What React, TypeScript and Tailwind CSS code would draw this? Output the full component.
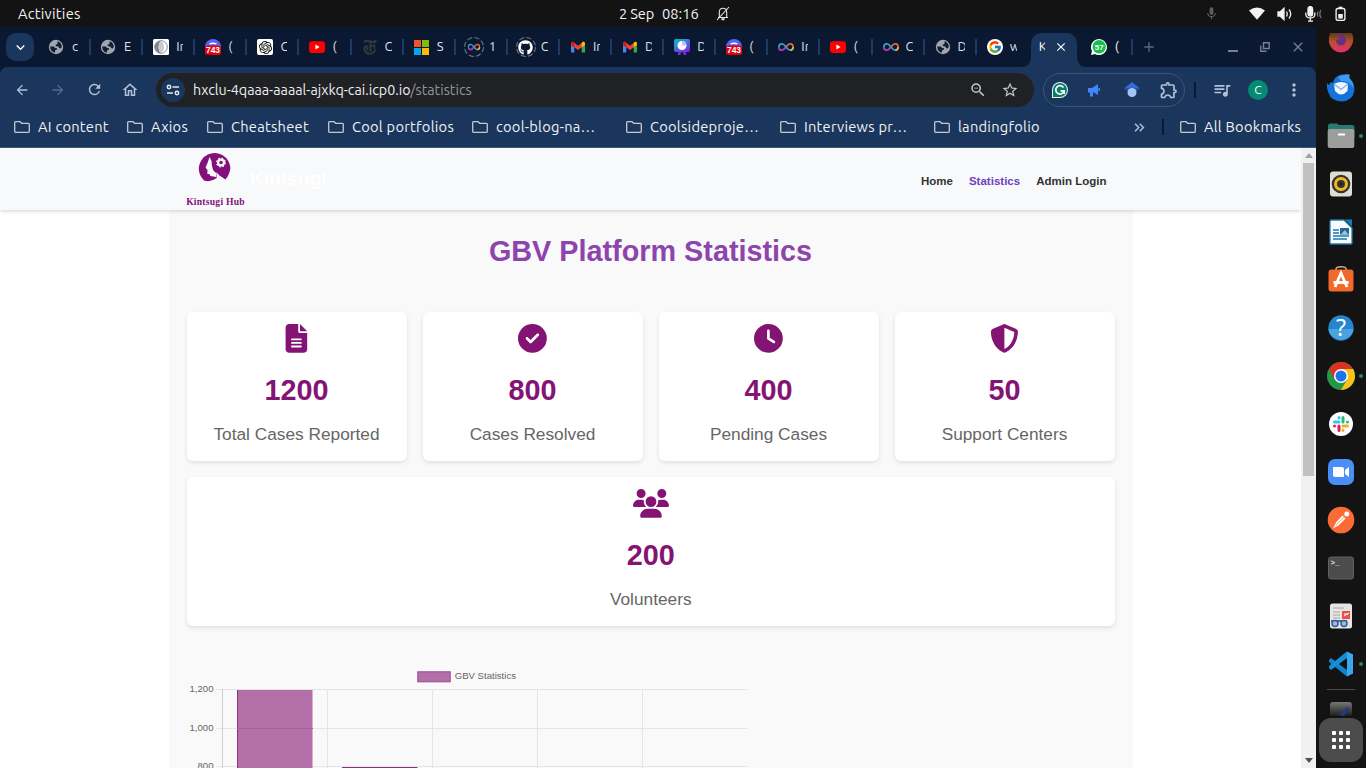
import type { ReactNode } from 'react';
import { FaFileLines, FaCircleCheck, FaClock, FaShieldHalved, FaUsers, FaGithub } from 'react-icons/fa6';
import {
  MdArrowBack, MdArrowForward, MdRefresh, MdStarOutline, MdOutlineExtension, MdQueueMusic,
  MdMoreVert, MdClose, MdAdd, MdKeyboardArrowDown, MdOutlineZoomOut, MdMic,
  MdKeyboardDoubleArrowRight, MdOutlineHome,
} from 'react-icons/md';
import { SiOpenai } from 'react-icons/si';
import { FcGoogle } from 'react-icons/fc';

const Globe = () => (
  <svg viewBox="0 0 16 16" className="size-4 shrink-0">
    <circle cx="8" cy="8" r="7.200" fill="#a0a5ae" />
    <path d="M2.200 7.500 6 7.500 7 9 9 9.200 9 10.500 7.200 11.200 6.800 13.800Q2.200 12.500 2.200 7.500ZM9.500 2.300Q13.500 3.500 13.800 7.500L13 9.500 11 9 10.500 7.500 8 7.300 7.500 5.800 9.500 5Z" fill="#101e34" />
  </svg>
);

const Discord = () => (
  <svg viewBox="0 0 16 16" className="size-4 shrink-0">
    <circle cx="8" cy="8" r="8" fill="#5865f2" />
    <path d="M4.500 5Q8 3.500 11.500 5" stroke="#fff" strokeWidth="1.300" fill="none" />
    <rect y="6.500" width="16" height="9.500" rx="2.500" fill="#e3000b" />
    <text x="8" y="14.300" textAnchor="middle" fontFamily="Liberation Sans" fontWeight="700" fontSize="8.400" fill="#fff">743</text>
  </svg>
);

const YouTube = () => (
  <svg viewBox="0 0 16 16" className="size-4 shrink-0">
    <rect y="2.300" width="16" height="11.600" rx="3" fill="#f00" />
    <path d="M6.400 5.600 10.600 8 6.400 10.400Z" fill="#fff" />
  </svg>
);

const Gmail = () => (
  <svg viewBox="0 0 16 16" className="size-4 shrink-0">
    <path d="M1 4.500V13.500H4.300V7Z" fill="#4285f4" />
    <path d="M15 4.500V13.500H11.700V7Z" fill="#34a853" />
    <path d="M1 4.300Q1.200 2.300 3 2.800L8 6.700 13 2.800Q14.800 2.300 15 4.300L15 6 8 11 1 6Z" fill="#ea4335" />
    <path d="M11.700 4 13 2.800Q14.800 2.300 15 4.300V6L11.700 8.400Z" fill="#fbbc04" />
    <path d="M1 4.300Q1.200 2.300 3 2.800L4.300 4V8.400L1 6Z" fill="#c5221f" />
  </svg>
);

const Infinity = () => (
  <svg viewBox="0 0 16 16" className="size-4 shrink-0">
    <path d="M8 8C6.500 6 5.400 4.800 3.800 4.800A3.100 3.100 0 0 0 .9 8a3.100 3.100 0 0 0 2.900 3.200C5.400 11.200 6.500 10 8 8" fill="none" stroke="#29abe2" strokeWidth="1.600" />
    <path d="M.9 8a3.100 3.100 0 0 0 2.900 3.200C5.400 11.200 6.500 10 8 8" fill="none" stroke="#c22aa0" strokeWidth="1.600" />
    <path d="M8 8C9.500 6 10.600 4.800 12.200 4.800A3.100 3.100 0 0 1 15.100 8" fill="none" stroke="#f26a2c" strokeWidth="1.600" />
    <path d="M15.100 8a3.100 3.100 0 0 1-2.900 3.200C10.600 11.200 9.500 10 8 8" fill="none" stroke="#29abe2" strokeWidth="1.600" />
    <path d="M15.100 8a3.100 3.100 0 0 1-2.900 3.200" fill="none" stroke="#fbb03b" strokeWidth="1.600" />
  </svg>
);

const SmallInfinity = () => <div className="flex scale-[.8]"><Infinity /></div>;

const Dashed = ({ children }: { children: ReactNode }) => (
  <div className="relative -mx-[2px] flex size-5 shrink-0 items-center justify-center">
    <svg viewBox="0 0 20 20" className="absolute inset-0 size-5 overflow-visible">
      <circle cx="10" cy="10" r="9.500" fill="none" stroke="#66738a" strokeWidth="1.100" strokeDasharray="5.400 2.060" />
    </svg>
    {children}
  </div>
);

const Microsoft = () => (
  <div className="grid size-[15px] grid-cols-2 gap-px">
    <i className="bg-[#f35325]" /><i className="bg-[#81bc06]" /><i className="bg-[#05a6f0]" /><i className="bg-[#ffba08]" />
  </div>
);

const Times = () => (
  <svg viewBox="0 0 16 16" className="size-4 shrink-0" fill="none" stroke="#363a40">
    <path d="M2 3.500Q2.500 1.500 5 1.700L11 3Q13.500 3.300 13.800 1" strokeWidth="2" />
    <path d="M4.500 6.500Q2 8 2.500 11.200 4 15 8.500 14.800 12.500 14 13.300 10.500" strokeWidth="1.800" />
    <path d="M8.500 3V13M5.500 6.500V11.500" strokeWidth="1.800" />
    <path d="M8.500 7.500 12.500 6V10" strokeWidth="1.500" />
  </svg>
);

const Moon = () => (
  <svg viewBox="0 0 16 16" className="size-4 shrink-0">
    <rect width="16" height="16" rx="1.500" fill="#fff" />
    <circle cx="8" cy="8" r="6.300" fill="#fff" stroke="#8a9096" strokeWidth="1" />
    <path d="M8 1.700a6.300 6.300 0 0 0 0 12.600Q5.500 12 5.500 8T8 1.700" fill="#7d858c" />
    <path d="M8 1.700Q5.500 4 5.500 8T8 14.300Q11 12 11 8T8 1.700" fill="#c8ccd0" />
  </svg>
);

const OpenAI = () => <div className="flex size-4 items-center justify-center rounded-[2px] bg-white"><SiOpenai className="size-[13px] text-black" /></div>;

const Award = () => (
  <svg viewBox="0 0 16 16" className="size-4 shrink-0">
    <defs><linearGradient id="aw" x1="0" y1="0" x2=".7" y2="1"><stop offset="0" stopColor="#00c4cc" /><stop offset="1" stopColor="#7d2ae8" /></linearGradient></defs>
    <path d="M5 12 3.500 16H6L8 12 10 16H12.500L11 12Z" fill="#7d2ae8" />
    <rect width="16" height="13" rx="2" fill="url(#aw)" />
    <circle cx="8" cy="6.500" r="4.500" fill="#fff" />
    <path d="M8 6.500V2A4.500 4.500 0 0 1 12.500 6.500Z" fill="#c9b8f8" />
  </svg>
);

const Google = () => <div className="flex size-4 items-center justify-center rounded-full bg-white"><FcGoogle className="size-[14px]" /></div>;

const tabs: { icon: ReactNode; t: string }[] = [
  { icon: <div className="mr-px -ml-px"><Globe /></div>, t: 'c' },
  { icon: <div className="mr-px -ml-px"><Globe /></div>, t: 'E' },
  { icon: <Moon />, t: 'In' },
  { icon: <Discord />, t: '(' },
  { icon: <OpenAI />, t: 'C' },
  { icon: <YouTube />, t: '(' },
  { icon: <Times />, t: 'C' },
  { icon: <Microsoft />, t: 'S' },
  { icon: <Dashed><SmallInfinity /></Dashed>, t: '1' },
  { icon: <Dashed><FaGithub className="size-[15px] text-white" /></Dashed>, t: 'C' },
  { icon: <Gmail />, t: 'In' },
  { icon: <Gmail />, t: 'D' },
  { icon: <Award />, t: 'D' },
  { icon: <Discord />, t: '(' },
  { icon: <Infinity />, t: 'In' },
  { icon: <YouTube />, t: '(' },
  { icon: <Infinity />, t: 'C' },
  { icon: <Globe />, t: 'D' },
  { icon: <Google />, t: 'w' },
];

function TopBar() {
  return (
    <div className="flex h-[27px] shrink-0 items-center bg-[#131313] text-[14.660px] text-[#f2f2f2]">
      <span className="ml-[18px] w-[601px] pt-px tracking-[0.250px]">Activities</span>
      <span className="w-[43px] pt-px tracking-[-0.150px] whitespace-pre">2 Sep</span>
      <span className="w-[54px] pt-px">08:16</span>
      <svg viewBox="0 0 14 15" className="h-[15px] w-[14px]" fill="none" stroke="#e6e6e6" strokeWidth="1.100">
        <path d="M2 11.500H12M3.300 11V6Q3.500 2.200 7 2.200T10.700 6V11M1 14 13 1" />
        <path d="M5.500 13.200H8.500" strokeWidth="2" />
      </svg>
      <MdMic className="ml-[474px] size-[15px] text-[#5e5e5e]" />
      <svg viewBox="0 0 16 13" className="ml-[30px] h-[13px] w-4" fill="#f2f2f2"><path d="M0 3.500Q8-2.500 16 3.500L8 12.800Z" /></svg>
      <svg viewBox="0 0 16 14" className="ml-[12px] h-[14px] w-4" fill="none" stroke="#eee" strokeWidth="1.300">
        <path d="M1 5H3L7 1.300V12.700L3 9H1Z" fill="#f2f2f2" /><path d="M9.500 4.500Q11 7 9.500 9.500M12 2.500Q15.500 7 12 11.500" />
      </svg>
      <svg viewBox="0 0 17 16" className="ml-[12px] h-4 w-[17px]" fill="none" stroke="#f2f2f2" strokeWidth="1.300">
        <rect x="3" y=".6" width="4.600" height="9.500" rx="2.300" fill="#f2f2f2" /><path d="M.8 6.500V8.500Q1 12 5.300 12T9.800 8.500V6.500M5.300 12V15M3 15.200H8" />
        <path d="M13 5.500Q11.600 8 13 10.500M16 4Q13.600 8 16 12" stroke="#777" />
      </svg>
      <svg viewBox="0 0 12 16" className="ml-[13px] h-4 w-[11px]" fill="none" stroke="#f2f2f2" strokeWidth="1.500">
        <path d="M4 1H8" strokeWidth="2" /><rect x="1.200" y="2" width="9.600" height="13" rx="2" /><rect x="3.500" y="8" width="5" height="5" fill="#f2f2f2" stroke="none" />
      </svg>
    </div>
  );
}

function TabStrip() {
  return (
    <div className="flex h-10 shrink-0 items-center bg-[#0a1931]">
      <div className="mr-[4px] ml-[6px] flex size-7 shrink-0 items-center justify-center rounded-[10px] bg-[#1b365d]"><MdKeyboardArrowDown className="size-[17px] text-white" /></div>
      {tabs.map((tab, i) => (
        <div key={i} className={`flex h-4 w-[52.100px] shrink-0 items-center pl-[10px] ${i < 18 ? 'border-r-2 border-[#1b3a66]' : ''} ${i === 0 ? 'ml-px -mr-px pr-px' : ''} ${i === 1 ? 'ml-px' : ''}`}>
          <div className="flex w-4 shrink-0 justify-center">{tab.icon}</div>
          <span className="ml-[7px] w-[7px] shrink-0 overflow-hidden text-[13px] whitespace-nowrap text-[#dfe3e8]">{tab.t}</span>
        </div>
      ))}
      <div className="-ml-[8px] flex h-full w-[10px] shrink-0 items-end"><svg viewBox="0 0 10 10" className="size-[10px]"><path d="M10 0V10H0Q10 10 10 0" fill="#1b365d" /></svg></div>
      <div className="flex h-[34px] w-[46px] shrink-0 items-center self-end rounded-t-[10px] bg-[#1b365d] pb-[6px]">
        <span className="ml-[8px] w-[6px] overflow-hidden text-[13px] text-white">K</span>
        <MdClose className="ml-[9px] size-[14px] text-white" />
      </div>
      <div className="flex h-full w-[10px] shrink-0 items-end"><svg viewBox="0 0 10 10" className="size-[10px]"><path d="M0 0V10H10Q0 10 0 0" fill="#1b365d" /></svg></div>
      <svg viewBox="0 0 16 16" className="ml-[4px] size-4 shrink-0">
        <path d="M0 16 1 12A8 8 0 1 1 4 15Z" fill="#fff" /><circle cx="8.200" cy="7.800" r="6.700" fill="#13c24b" />
        <text x="8.200" y="10.700" textAnchor="middle" fontFamily="Liberation Sans" fontWeight="700" fontSize="7.800" fill="#fff">57</text>
      </svg>
      <span className="ml-[8px] w-[16px] text-[13px] text-white">(</span>
      <div className="h-4 w-[2px] shrink-0 bg-[#1b3a66]" />
      <MdAdd className="ml-[8px] size-4 shrink-0 text-[#5b6a7e]" />
      <div className="mr-[10px] ml-auto flex items-center text-[#76818f]">
        <div className="mt-2 h-[2px] w-[10px] bg-[#76818f]" />
        <svg viewBox="0 0 10 10" className="ml-[22px] size-[10px]" fill="none" stroke="currentColor" strokeWidth="1.400"><path d="M3.500.8H9.200V6.500H3.500ZM.8 3.500V9.200H6.500" /></svg>
        <MdClose className="ml-[20px] size-4" />
      </div>
    </div>
  );
}

function Toolbar() {
  return (
    <div className="flex h-[45px] shrink-0 items-center text-[#b3c1d8]">
      <MdArrowBack className="ml-[14px] size-4" />
      <MdArrowForward className="ml-[20px] size-4 text-[#566c8e]" />
      <MdRefresh className="ml-[20px] size-[17px]" />
      <MdOutlineHome className="ml-[18px] size-[18px]" />
      <div className="ml-[17px] flex h-[34px] w-[878px] items-center rounded-full bg-[#202124]">
        <div className="ml-[5px] flex size-6 items-center justify-center rounded-full bg-[#1b365d]">
          <svg viewBox="0 0 14 12" className="h-3 w-[14px]" fill="none" stroke="#e3e8ef" strokeWidth="1.500"><circle cx="3" cy="3" r="1.700" /><path d="M6.500 3H13M1 9H7" /><circle cx="11" cy="9" r="1.700" /></svg>
        </div>
        <span className="ml-[8px] pt-[2px] text-[14.250px] text-[#eceef1]">hxclu-4qaaa-aaaal-ajxkq-cai.icp0.io<span className="text-[#92969b]">/statistics</span></span>
        <MdOutlineZoomOut className="ml-auto size-[18px] text-[#c4c7cb]" />
        <MdStarOutline className="mr-[15px] ml-[14px] size-[18px] text-[#c4c7cb]" />
      </div>
      <div className="ml-[9px] flex h-[34px] w-[142px] items-center rounded-full border border-[#3b5477]">
        <svg viewBox="0 0 16 16" className="ml-[8px] size-4"><path d="M0 16V8A8 8 0 1 1 8 16Z" fill="#e9f3f0" /><path d="M1 15V8A7 7 0 1 1 8 15Z" fill="#087d68" /><path d="M11.500 5.500A4.200 4.200 0 1 0 12.100 8.800H8.500M12.200 8V12" fill="none" stroke="#fff" strokeWidth="1.700" /></svg>
        <svg viewBox="0 0 12 14" className="ml-[20px] h-[14px] w-3" fill="#4285f4"><path d="M0 5H4L10 1V12L6 9.500H5V13.500H2V9.500H0ZM10.500 5H12V8H10.500Z" /></svg>
        <svg viewBox="0 0 16 16" className="ml-[24px] size-4"><path d="M8 0 16 6.500H0Z" fill="#356bd4" /><path d="M0 6.500H16L11 10H5Z" fill="#2455b8" /><circle cx="8" cy="10.500" r="4.500" fill="#a4c2f7" /></svg>
        <MdOutlineExtension className="ml-[19px] size-5" />
      </div>
      <div className="ml-[9px] h-4 w-[2px] bg-[#0a1931]" />
      <MdQueueMusic className="ml-[16px] size-[20px]" />
      <div className="ml-[16px] flex size-5 items-center justify-center rounded-full bg-[#058a73] text-[12px] text-white">C</div>
      <MdMoreVert className="ml-[16px] size-[20px]" />
    </div>
  );
}

const Folder = () => <svg viewBox="0 0 16 12" className="h-3 w-4 shrink-0" fill="none" stroke="#c7c9cc" strokeWidth="1.300"><path d="M1.500.7H6L7.700 2.300H14.500Q15.300 2.300 15.300 3.200V10.500Q15.300 11.300 14.500 11.300H1.500Q.7 11.300.7 10.500V1.500Q.7.7 1.500.7Z" /></svg>;

const bookmarks = [
  { t: 'AI content', c: 'w-[113px]' },
  { t: 'Axios', c: 'w-[80px]' },
  { t: 'Cheatsheet', c: 'w-[121px]' },
  { t: 'Cool portfolios', c: 'w-[144px]' },
  { t: 'cool-blog-na…', c: 'w-[154px]' },
  { t: 'Coolsideproje…', c: 'w-[154px]' },
  { t: 'Interviews pr…', c: 'w-[154px]' },
  { t: 'landingfolio', c: 'w-[192px]' },
];

function Bookmarks() {
  return (
    <div className="flex h-[36px] shrink-0 items-center border-b border-[#3f5676] pb-[5px] pl-[14px] text-[14.660px] tracking-[0.250px] text-[#f0f2f5]">
      {bookmarks.map((b) => (
        <div key={b.t} className={`flex shrink-0 items-center gap-2 whitespace-nowrap ${b.c}`}><Folder />{b.t}</div>
      ))}
      <MdKeyboardDoubleArrowRight className="ml-[5px] size-[17px] text-[#b3c1d8]" />
      <div className="mr-[16px] ml-[14px] h-4 w-[2px] bg-[#0a1931]" />
      <div className="flex items-center gap-2 whitespace-nowrap"><Folder />All Bookmarks</div>
    </div>
  );
}

function Card({ icon, n, label, wide }: { icon: ReactNode; n: string; label: string; wide?: boolean }) {
  return (
    <div className={`flex h-[149px] flex-col items-center rounded-[6px] bg-white pt-3 shadow-[0_2px_4px_rgba(0,0,0,0.1)] ${wide ? 'col-span-4 pr-[0.500px]' : 'pr-px'}`}>
      <div className="h-[29px] text-[28.800px] text-[#841474]">{icon}</div>
      <div className="mt-[21px] text-[28.800px] leading-[33px] font-bold text-[#841474]">{n}</div>
      <div className="mt-[17px] text-[17.280px] leading-5 text-[#666]">{label}</div>
    </div>
  );
}

function Chart() {
  return (
    <svg viewBox="187 660 561 108" className="mt-[34px] h-[108px] w-[561px] shrink-0" fontFamily="Liberation Sans, Arial, sans-serif" fontSize="9.600" fill="#666">
      <rect x="417.800" y="671.800" width="32.400" height="10" fill="#b36fa8" stroke="#9b4690" />
      <text x="454.700" y="679">GBV Statistics</text>
      <g stroke="#e5e5e5">
        <path d="M216 689.500H747M216 728.500H747M216 766.500H747M327.500 689V768M432.500 689V768M537.500 689V768M642.500 689V768" />
        <path d="M222.500 689V768" stroke="#cfcfcf" />
      </g>
      <rect x="237" y="690" width="75.500" height="78" fill="#b36fa8" />
      <path d="M237.500 690V768M342 767.500H417.500" stroke="#8b3580" />
      <path d="M312.500 690V768" stroke="#d6b0d0" />
      <path d="M237 728.500H313" stroke="#a3639a" />
      <g textAnchor="end"><text x="213.500" y="692">1,200</text><text x="213.500" y="731">1,000</text><text x="213.500" y="769">800</text></g>
    </svg>
  );
}

function Logo() {
  return (
    <div className="flex w-[60px] flex-col items-center">
      <svg viewBox="0 0 33 32" className="-ml-px h-8 w-[33px]">
        <path d="M6 28.500A15.800 15.800 0 1 1 32.400 16Q31.800 22 27.500 27.500Q20 23 18.500 20L18.700 26Q12 31 6 28.500Z" fill="#84107a" />
        <path d="M11.500 5Q14 8 13.800 13L15 18 18.500 21.500 18.300 25 12.500 24 11.300 22 9.300 22 9.500 18 7.500 15.500 9.500 11Z" fill="#f8f9fb" />
        <circle cx="23" cy="10.500" r="2.900" fill="none" stroke="#f8f9fb" strokeWidth="2.200" /><circle cx="23" cy="10.500" r="4.300" fill="none" stroke="#f8f9fb" strokeWidth="1.300" strokeDasharray="1.700 1.680" />
      </svg>
      <span className="mt-[12px] ml-px font-['Liberation_Serif',serif] text-[9.600px] leading-[11px] font-bold tracking-[0.250px] whitespace-nowrap text-[#84107a]">Kintsugi Hub</span>
    </div>
  );
}

function WebPage() {
  return (
    <div className="flex min-h-0 flex-1 bg-white font-['Liberation_Sans',Arial,sans-serif]">
      <div className="flex min-w-0 flex-1 flex-col overflow-hidden">
        <div className="z-10 flex h-[62px] shrink-0 items-start bg-[#f8f9fb] shadow-[0_1px_4px_rgba(0,0,0,0.18)]">
          <div className="ml-[185px] pt-[4px]"><Logo /></div>
          <span className="mt-[19px] ml-[5px] text-[19.200px] leading-6 font-bold text-white">Kintsugi</span>
          <div className="mt-[26px] mr-[194.500px] ml-auto flex gap-4 text-[11.520px] leading-[14px] font-bold text-[#333]"><span>Home</span><span className="text-[#6f42c1]">Statistics</span><span>Admin Login</span></div>
        </div>
        <div className="ml-[169px] flex min-h-0 w-[964px] flex-1 flex-col overflow-hidden bg-[#f9f9f9] px-[18px]">
          <h1 className="mt-[24px] pr-px text-center text-[28.800px] leading-[34px] font-bold text-[#8e44ad]">GBV Platform Statistics</h1>
          <div className="mt-[44px] grid shrink-0 grid-cols-4 gap-4">
            <Card icon={<FaFileLines />} n="1200" label="Total Cases Reported" />
            <Card icon={<FaCircleCheck />} n="800" label="Cases Resolved" />
            <Card icon={<FaClock />} n="400" label="Pending Cases" />
            <Card icon={<FaShieldHalved />} n="50" label="Support Centers" />
            <Card icon={<FaUsers className="h-[28.800px] w-[36px]" />} n="200" label="Volunteers" wide />
          </div>
          <Chart />
        </div>
      </div>
      <div className="flex w-[15px] shrink-0 flex-col items-center justify-between bg-[#f1f1f1] py-[5px]">
        <svg viewBox="0 0 8 5" className="h-[5px] w-2"><path d="M0 5 4 0 8 5Z" fill="#a3a3a3" /></svg>
        <div className="mt-[5px] mb-auto h-[313px] w-[11px] bg-[#c1c1c1]" />
        <svg viewBox="0 0 8 5" className="h-[5px] w-2"><path d="M0 0 4 5 8 0Z" fill="#505050" /></svg>
      </div>
    </div>
  );
}

const DockSvg = ({ children }: { children: ReactNode }) => <svg viewBox="0 0 28 28" className="size-7 shrink-0">{children}</svg>;

const dock: { icon: ReactNode; dot?: boolean }[] = [
  { icon: <DockSvg><path d="M0 9 2 11 4 8 6 9Q7 2 15 .5L23 1 21 4Q28 8 27.500 16 26 27 14.500 27.500 4 27 1.500 19L0 14Z" fill="#1671d9" /><path d="M11 3Q20-1 23 1 21 3 24 6 27 9 26 14 22 6 14 7Z" fill="#3f9bf2" /><path d="M7 10Q14 6 21 10L20.500 17Q14 24 8 17Z" fill="#f0f6fd" /><path d="M7 10 14 15.500 21 10" fill="none" stroke="#7fb4ee" strokeWidth="1.300" /></DockSvg> },
  { icon: <DockSvg><path d="M1 4Q1 1.500 3 1.500H10L12 3H25Q27.500 3 27.500 5V16H1Z" fill="#2b7771" /><rect x=".7" y="7" width="26.600" height="19" rx="2" fill="#9d9d9d" /><path d="M11 12.500H18" stroke="#fff" strokeWidth="2" /></DockSvg>, dot: true },
  { icon: <DockSvg><rect x="3" y="1.500" width="22" height="25" rx="3" fill="#e0ddd5" /><circle cx="14" cy="14" r="9.300" fill="#353535" /><circle cx="14" cy="14" r="5.500" fill="none" stroke="#f0ba20" strokeWidth="3" /><circle cx="14" cy="14" r="1.600" fill="#222" /></DockSvg> },
  { icon: <DockSvg><path d="M4 2H17L25 10V25Q25 26 24 26H4Q3 26 3 25V3Z" fill="#f8fbfd" stroke="#247aaa" strokeWidth="1.300" /><path d="M18 1.500H25V8.500Z" fill="#187bb5" /><path d="M6 12H12M6 15H12M6 18H22M6 21H20" stroke="#1d78ad" strokeWidth="1.500" /><rect x="13" y="10" width="9" height="6.500" fill="#286491" /><path d="M14 16 18 12 21 16" fill="#8bc5e8" /></DockSvg> },
  { icon: <DockSvg><path d="M9 5V3Q9 .8 14 .8T19 3V5" fill="none" stroke="#d3ad8a" strokeWidth="1.500" /><rect x="1.500" y="3.500" width="25" height="22" rx="3" fill="#f2692c" /><path d="M8 21 14 7 20 21M6.500 16.500H21.500" fill="none" stroke="#fff" strokeWidth="2.800" /></DockSvg> },
  { icon: <DockSvg><circle cx="14" cy="14" r="12.700" fill="#2586cf" /><path d="M1.500 15H26.500A12.600 12.600 0 0 1 1.500 15" fill="#48a3df" /><text x="14" y="22" textAnchor="middle" fontFamily="Noto Sans, sans-serif" fontSize="23" fill="#fff">?</text></DockSvg> },
  { icon: <DockSvg><circle cx="14" cy="14" r="14" fill="#259746" /><path d="M14 28A14 14 0 0 0 26.100 7H14L20.100 17.500Z" fill="#fbc116" /><path d="M1.900 7A14 14 0 0 1 26.100 7H14L7.900 17.500Z" fill="#dd3025" /><circle cx="14" cy="14" r="7" fill="#fff" /><circle cx="14" cy="14" r="5.500" fill="#1a73e8" /></DockSvg>, dot: true },
  { icon: <DockSvg><circle cx="14" cy="14" r="12" fill="#fff" /><g strokeWidth="3" strokeLinecap="round"><path d="M12 7.500V8M7.500 12H12" stroke="#36c5f0" /><path d="M16 7.500V12M20.500 12V12" stroke="#2eb67d" /><path d="M16 20.500V20M16 16H20.500" stroke="#ecb22e" /><path d="M7.500 16V16M12 16V20.500" stroke="#e01e5a" /></g></DockSvg> },
  { icon: <DockSvg><rect x="1" y="1" width="26" height="26" rx="7" fill="#4a8ff7" /><path d="M6 9H15Q17 9 17 11V19H8Q6 19 6 17ZM18 12 22 9V19L18 16Z" fill="#fff" /></DockSvg> },
  { icon: <DockSvg><circle cx="14" cy="14" r="13.300" fill="#fb6b36" /><circle cx="19.800" cy="8" r="2.500" fill="#fff" /><path d="M15.500 9.500 18.500 12.500 12 19 6 22.500 9 16.500Z" fill="#fff" /><path d="M9 19 17.500 10.500" stroke="#fb6b36" strokeWidth=".7" /></DockSvg> },
  { icon: <DockSvg><rect x="1.500" y="3" width="25" height="22" rx="2.500" fill="#4b4c4b" stroke="#606160" /><text x="3.500" y="10.500" fontFamily="Liberation Mono" fontWeight="700" fontSize="7.500" fill="#e4e4e4">&gt;_</text></DockSvg> },
  { icon: <DockSvg><rect x="3" y="1.500" width="22" height="25" rx="2.500" fill="#e8e6e2" /><path d="M6 6H17M6 10H13M6 13H13M6 16H13" stroke="#aaa69f" strokeWidth="1.200" /><rect x="15" y="9" width="8" height="8" fill="#e45343" /><path d="M17 14 22 11M17 12H21" stroke="#fff" /><path d="M4 19H20" stroke="#2d609d" strokeWidth="1.800" /><circle cx="8" cy="21.500" r="3" fill="#a5b9ce" stroke="#2d609d" strokeWidth="1.500" /><circle cx="17" cy="21.500" r="3" fill="#a5b9ce" stroke="#2d609d" strokeWidth="1.500" /></DockSvg> },
  { icon: <DockSvg><path d="M2 10 4 8 20 20V26.500L18 25 2 12Z" fill="#1681c9" /><path d="M2 18 4 20 20 8V1.500L18 3 2 16Z" fill="#168fd9" /><path d="M20 1.500 26 4.500V23.500L20 26.500Z" fill="#38a9ef" /></DockSvg>, dot: true },
];

function Dock() {
  return (
    <div className="flex w-[50px] shrink-0 flex-col items-center bg-[#131313]">
      <div className="flex h-[37px] items-start overflow-hidden pt-[6px]">
        <svg viewBox="0 6 26 20" className="h-5 w-[26px]">
          <defs><linearGradient id="fx" x1="0" y1="0" x2="0" y2="1"><stop offset="0" stopColor="#5a3c18" /><stop offset=".45" stopColor="#b8502c" /><stop offset="1" stopColor="#ec2a72" /></linearGradient></defs>
          <path d="M2 6H24Q26 10 25 15 22 25 13 25.500 4 25 1 16 .5 10 2 6Z" fill="url(#fx)" /><path d="M9 6Q16 7 18 12 18 18 13 18.500 8 18 8 13L12 12Z" fill="#6a2c87" />
        </svg>
      </div>
      {dock.map((d, i) => (
        <div key={i} className="flex h-12 w-full shrink-0 items-center pl-[11px]">{d.icon}{d.dot && <i className="ml-[4px] size-1 rounded-full bg-[#2c7f7a]" />}</div>
      ))}
      <div className="mt-px h-px w-7 shrink-0 bg-[#4b4b4b]" />
      <svg viewBox="0 0 22 14" className="mt-[12px] h-[14px] w-[22px] shrink-0">
        <defs><linearGradient id="pt" x1="0" y1="0" x2="0" y2="1"><stop offset="0" stopColor="#777" /><stop offset="1" stopColor="#1d1d1d" /></linearGradient></defs>
        <path d="M0 14V3Q0 0 3 0H19Q22 0 22 3V14Z" fill="url(#pt)" /><path d="M9 13 17 5 20 7 14 14Z" fill="#243b78" />
      </svg>
      <div className="mt-[2px] flex size-11 shrink-0 items-center justify-center rounded-[12px] bg-[#4c4c4c]">
        <div className="grid grid-cols-3 gap-[3px]">
          {Array.from({ length: 9 }, (_, i) => <i key={i} className="size-1 rounded-[1px] bg-white" />)}
        </div>
      </div>
    </div>
  );
}

export default function App() {
  return (
    <div className="flex h-[768px] w-[1366px] flex-col overflow-hidden bg-[#131313] font-['Ubuntu','Noto_Sans',sans-serif]">
      <TopBar />
      <div className="flex min-h-0 flex-1">
        <div className="flex w-[1316px] shrink-0 flex-col">
          <TabStrip />
          <div className="bg-[#0a1931]"><div className="rounded-t-[8px] bg-[#1b365d]"><Toolbar /><Bookmarks /></div></div>
          <WebPage />
        </div>
        <Dock />
      </div>
    </div>
  );
}
